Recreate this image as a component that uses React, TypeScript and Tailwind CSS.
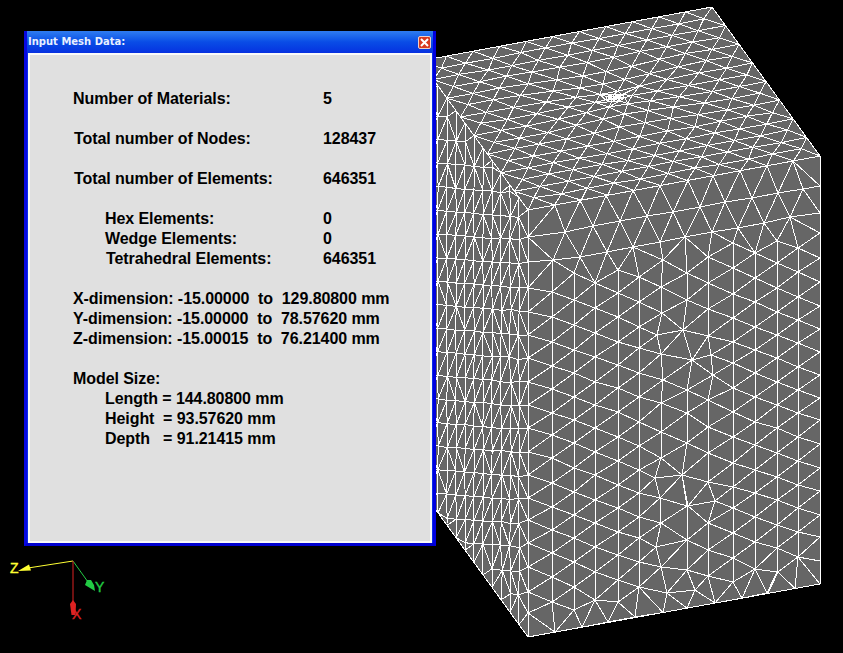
type Pt = [number, number];

const A: Pt = [712, 7];
const R: Pt = [820, 156];
const F: Pt = [528, 210];
const L: Pt = [420, 61];
const R2: Pt = [820, 584];
const B: Pt = [528, 637];
const L2: Pt = [420, 488];

function noise(i: number) {
  const v = Math.sin(i * 12.9898) * 43758.5453;
  return v - Math.floor(v) - 0.5;
}

// Bowyer-Watson, returns index pairs
function triangulate(pts: Pt[]): [number, number][] {
  const n = pts.length;
  const all: Pt[] = [...pts, [-20000, -20000], [20000, -20000], [0, 30000]];
  let tris: [number, number, number][] = [[n, n + 1, n + 2]];
  const inCircle = (t: [number, number, number], p: Pt) => {
    const [a, b, c] = t.map((k) => all[k]);
    const ax = a[0] - p[0], ay = a[1] - p[1];
    const bx = b[0] - p[0], by = b[1] - p[1];
    const cx = c[0] - p[0], cy = c[1] - p[1];
    const det =
      (ax * ax + ay * ay) * (bx * cy - cx * by) -
      (bx * bx + by * by) * (ax * cy - cx * ay) +
      (cx * cx + cy * cy) * (ax * by - bx * ay);
    const area = (b[0] - a[0]) * (c[1] - a[1]) - (c[0] - a[0]) * (b[1] - a[1]);
    return area > 0 ? det > 0 : det < 0;
  };
  pts.forEach((p, i) => {
    const bad = tris.filter((t) => inCircle(t, p));
    const keep = tris.filter((t) => !inCircle(t, p));
    const count = new Map<string, [number, number]>();
    const seen = new Map<string, number>();
    bad.forEach(([a, b, c]) => {
      ([[a, b], [b, c], [c, a]] as [number, number][]).forEach(([u, v]) => {
        const key = u < v ? `${u}_${v}` : `${v}_${u}`;
        seen.set(key, (seen.get(key) || 0) + 1);
        count.set(key, [u, v]);
      });
    });
    count.forEach((edge, key) => {
      if (seen.get(key) === 1) keep.push([edge[0], edge[1], i]);
    });
    tris = keep;
  });
  const out = new Map<string, [number, number]>();
  tris.forEach(([a, b, c]) => {
    ([[a, b], [b, c], [c, a]] as [number, number][]).forEach(([u, v]) => {
      if (u < n && v < n) out.set(u < v ? `${u}_${v}` : `${v}_${u}`, [u, v]);
    });
  });
  return [...out.values()];
}

function toPath(pts: Pt[], edges: [number, number][]) {
  return edges
    .map(([a, b]) => `M${pts[a][0].toFixed(1)} ${pts[a][1].toFixed(1)}L${pts[b][0].toFixed(1)} ${pts[b][1].toFixed(1)}`)
    .join("");
}

// traced from the front face, one list per column
const frontCols: [number, number[]][] = [
  [528, [210, 237, 262, 288, 312, 335, 358, 382, 405, 428, 452, 475, 498, 520, 543, 567, 592, 613, 637]],
  [552, [292, 317, 342, 366, 389, 413, 435, 458, 483, 507, 530, 553, 577, 602]],
  [574, [273, 300, 325, 350, 373, 397, 420, 443, 468, 492, 515, 538, 562, 587, 610]],
  [595, [283, 308, 333, 357, 382, 405, 428, 452, 475, 500, 523, 547, 572, 600]],
  [618, [270, 293, 317, 342, 365, 388, 412, 437, 461, 485, 508, 532, 555, 580, 602]],
  [639, [277, 302, 327, 348, 373, 397, 422, 446, 470, 493, 517, 538, 562, 587]],
  [661, [287, 403, 432, 458, 523, 567]],
  [687, [273, 300, 390, 413, 443, 506, 540, 570]],
  [708, [257, 283, 309, 336, 400, 427, 453, 482, 523, 550, 576]],
  [733, [243, 268, 294, 318, 342, 363, 388, 412, 437, 463, 487, 508, 533, 558, 582]],
  [755, [253, 278, 302, 327, 350, 373, 397, 422, 445, 470, 493, 517, 542, 569]],
  [777, [241, 263, 288, 312, 335, 358, 382, 405, 428, 453, 477, 500, 525, 548, 572]],
  [798, [248, 272, 297, 320, 343, 367, 390, 413, 437, 461, 485, 508, 532, 557]],
  [820, [156, 186, 213, 233, 258, 282, 306, 329, 352, 375, 398, 420, 444, 468, 491, 515, 537, 561, 584]],
];

const frontExtra: Pt[] = [
  // upper rows, these run along the edge and not in columns
  [565, 232], [593, 226], [620, 221], [647, 216], [673, 212], [700, 207], [725, 202], [752, 198], [778, 193], [803, 189],
  [553, 260], [580, 257], [607, 252], [633, 247], [660, 242], [685, 237], [712, 232], [738, 228], [764, 223], [790, 217],
  // kinks in the middle of the face
  [657, 335], [662, 313], [661, 354], [663, 380], [683, 330], [692, 360], [711, 355], [713, 375],
  [655, 478], [660, 498], [682, 475], [688, 506], [715, 501], [656, 547], [667, 593], [695, 590], [715, 603],
  [663, 260], [778, 572], [767, 593], [635, 617], [608, 622],
];

function frontMesh() {
  const pts: Pt[] = [];
  frontCols.forEach(([x, ys]) => ys.forEach((y) => pts.push([x, y])));
  pts.push(...frontExtra);
  // nodes on the top and bottom edges
  [555, 580, 606, 633, 660, 688, 713, 740, 767, 793].forEach((x) => pts.push([x, 210 - ((x - 528) * 54) / 292]));
  [555, 582, 608, 635, 663, 687, 715, 742, 768, 795].forEach((x) => pts.push([x, 637 - ((x - 528) * 53) / 292]));
  return toPath(pts, triangulate(pts));
}

function leftMesh() {
  const cols = 12;
  const real: Pt[] = [];
  const step = (F[0] - L[0]) / cols;
  for (let i = 0; i <= cols; i++) {
    const x = L[0] + i * step;
    const top = L[1] + (i * (F[1] - L[1])) / cols;
    const bottom = L2[1] + (i * (B[1] - L2[1])) / cols;
    if (i < cols) {
      real.push([x, top], [x, bottom]);
    }
    // rows sit at the same height on each pair of columns
    const phase = 6.5 + (i % 2 ? -11.8 : 0) + i * 12.5;
    for (let j = -2; j < 22; j++) {
      const y = L[1] + phase + j * 23.6;
      if (i < cols && y > top + 7 && y < bottom - 7) {
        const near = i > 8 ? 2.6 : 1;
        real.push([x + noise(i * 31 + j) * near, y + noise(i * 17 + j * 3) * near]);
      }
    }
  }
  frontCols[0][1].forEach((y) => real.push([528, y]));
  const flat = real.map(([x, y]) => [x * 2.6, y] as Pt);
  return toPath(real, triangulate(flat));
}

function topMesh() {
  const cols = 11;
  const rows = 16;
  const vk = 0.866 * rows;
  const fu = 0.508 * cols;
  const fv = 0.432 * vk;
  const flat: Pt[] = [];
  const warp = (u: number, v: number, k: number): Pt => {
    const du = u - fu;
    const dv = v - fv;
    const r = Math.hypot(du, dv);
    const big = 3.6;
    if (r === 0 || r > big) return [u + noise(k) * 0.12, v + noise(k + 5) * 0.12];
    const s = Math.pow(r / big, 1.3) * big;
    return [fu + (du / r) * s + noise(k) * 0.06, fv + (dv / r) * s + noise(k + 5) * 0.06];
  };
  for (let j = 0; j <= rows; j++) {
    const odd = j % 2 === 1;
    const v = (j / rows) * vk;
    const edge = j === 0 || j === rows;
    for (let i = 0; i <= cols; i++) {
      const u = odd ? i + 0.5 : i;
      if (u > cols) continue;
      if (u === 0 || u === cols || edge) {
        flat.push([u, v]);
      } else {
        flat.push(warp(u, v, i * 37 + j * 11));
      }
    }
  }
  // rosette at the pinch point
  [0.16, 0.36].forEach((r, a) => {
    for (let k = 0; k < 7; k++) {
      const t = (k / 7) * Math.PI * 2 + a * 0.4;
      flat.push([fu + r * Math.cos(t), fv + r * Math.sin(t) * 0.9]);
    }
  });
  flat.push([fu, fv]);
  const real = flat.map(([u, v]) => {
    const s = u / cols;
    const t = v / vk;
    return [L[0] + s * (A[0] - L[0]) + t * (R[0] - A[0]), L[1] + s * (A[1] - L[1]) + t * (R[1] - A[1])] as Pt;
  });
  return toPath(real, triangulate(flat));
}

const poly = (p: Pt[]) => p.map((v) => v.join(",")).join(" ");
const meshPath = topMesh() + frontMesh() + leftMesh();

const lines: ([string, string?, string?] | null)[] = [
  ["Number of Materials:", "5"],
  null,
  ["Total number of Nodes:", "128437", "pl-px"],
  null,
  ["Total number of Elements:", "646351", "pl-px"],
  null,
  ["Hex Elements:", "0", "pl-8"],
  ["Wedge Elements:", "0", "pl-8"],
  ["Tetrahedral Elements:", "646351", "pl-[33px]"],
  null,
  ["X-dimension: -15.00000  to  129.80800 mm"],
  ["Y-dimension: -15.00000  to  78.57620 mm"],
  ["Z-dimension: -15.00015  to  76.21400 mm"],
  null,
  ["Model Size:"],
  ["Length = 144.80800 mm", undefined, "pl-8"],
  ["Height  = 93.57620 mm", undefined, "pl-8"],
  ["Depth   = 91.21415 mm", undefined, "pl-8"],
];

export default function App() {
  return (
    <div className="relative h-[653px] w-[843px] overflow-hidden bg-black">
      <svg className="absolute inset-0" width="843" height="653" viewBox="0 0 843 653">
        <polygon points={poly([A, R, R2, B, L2, L])} fill="#666666" />
        <path d={meshPath} fill="none" stroke="#ffffff" strokeWidth="1" shapeRendering="crispEdges" />
        <polygon points={poly([A, R, R2, B, L2, L])} fill="none" stroke="#ffffff" strokeWidth="1" shapeRendering="crispEdges" />
        <path d={`M${F[0]} ${F[1]}L${B[0]} ${B[1]}`} stroke="#ffffff" shapeRendering="crispEdges" />

        <line x1="73" y1="561" x2="28" y2="568" stroke="#ffff33" />
        <polygon points="18,571 29,564.5 31,570.5" fill="#ffff33" />
        <text x="10" y="573" fill="#ffff33" stroke="#ffff33" strokeWidth="0.4" fontSize="14" fontFamily="'Liberation Sans', sans-serif">Z</text>
        <line x1="73" y1="561" x2="88" y2="582" stroke="#22cc44" />
        <polygon points="95,591 85,585 87,580 91,580 94,585" fill="#22cc44" />
        <text x="95" y="592" fill="#22cc44" stroke="#22cc44" strokeWidth="0.4" fontSize="14" fontFamily="'Liberation Sans', sans-serif">Y</text>
        <line x1="73" y1="561" x2="73" y2="602" stroke="#dd2222" />
        <polygon points="70,604 73,600 76,604 75.5,615 71.5,615" fill="#dd2222" />
        <text x="72" y="619" fill="#dd2222" stroke="#dd2222" strokeWidth="0.4" fontSize="14" fontFamily="'Liberation Sans', sans-serif">X</text>
      </svg>

      <div className="absolute left-[24px] top-[31px] flex h-[515px] w-[412px] flex-col border-l-[3px] border-r-[3px] border-b-[3px] border-l-[#0808e0] border-r-[#0000e0] border-b-[#0000d0] bg-[#0a2ce8]">
        <div className="flex h-[22px] shrink-0 items-center justify-between bg-gradient-to-b from-[#2f7cf0] via-[#0a4ce6] to-[#0830e0] pl-px pr-[2px]">
          <span className="font-['DejaVu_Sans',sans-serif] text-[10px] font-bold leading-none text-[#e8f0ff]">
            Input Mesh Data:
          </span>
          <button className="flex h-[13px] w-[13px] items-center justify-center rounded-[2px] border border-[#f0d0c8] bg-[#d83a20]">
            <svg width="9" height="9" viewBox="0 0 9 9">
              <path d="M1 1L8 8M8 1L1 8" stroke="#ffffff" strokeWidth="2" />
            </svg>
          </button>
        </div>
        <div className="mx-px flex-1 border-2 border-[#fafafa] bg-[#e0e0e0] pl-[43px] pt-[34px] font-['Liberation_Sans',sans-serif] text-base font-bold leading-5 tracking-[-0.07px] text-black">
          {lines.map((row, i) =>
            row ? (
              <div key={i} className={`flex whitespace-pre ${row[2] || ""}`}>
                {row[1] === undefined ? (
                  <span>{row[0]}</span>
                ) : (
                  <>
                    <span className={
                      row[2] === "pl-8" ? "w-[218px]" : row[2] === "pl-[33px]" ? "w-[217px]" : row[2] === "pl-px" ? "w-[249px]" : "w-[250px]"
                    }>{row[0]}</span>
                    <span>{row[1]}</span>
                  </>
                )}
              </div>
            ) : (
              <div key={i} className="h-5" />
            )
          )}
        </div>
      </div>
    </div>
  );
}
